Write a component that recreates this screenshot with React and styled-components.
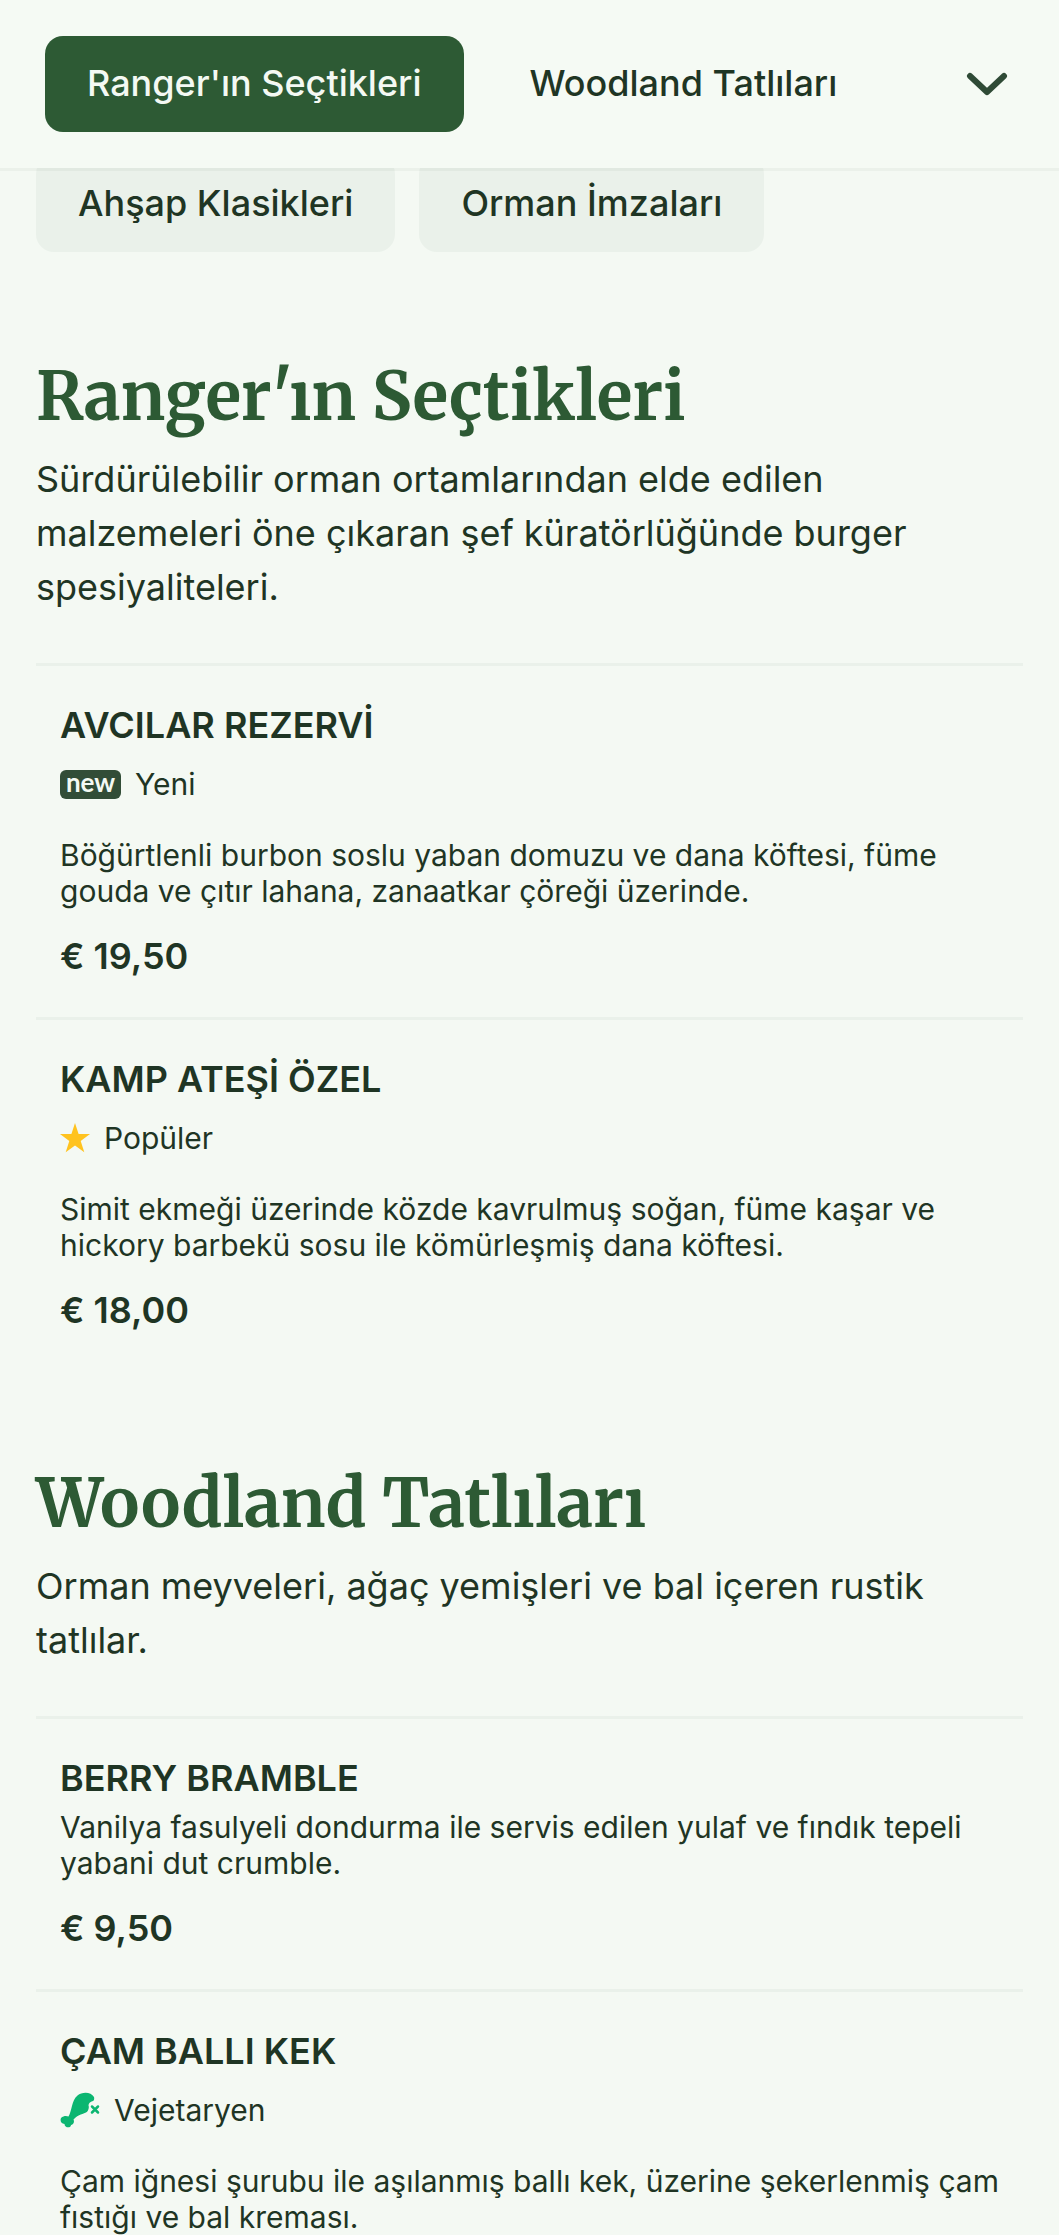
import React from "react";
import styled, { createGlobalStyle } from "styled-components";

const GlobalStyle = createGlobalStyle`
  * {
    box-sizing: border-box;
  }

  body {
    margin: 0;
    background: #f4f9f3;
    color: #1f3524;
    font-family: Inter, "Liberation Sans", sans-serif;
  }

  h2, h3, p {
    margin: 0;
  }
`;

const Page = styled.div`
  display: flex;
  flex-direction: column;
  height: 100vh;
  overflow: hidden;
`;

const Header = styled.header`
  display: flex;
  flex-shrink: 0;
  align-items: center;
  justify-content: space-between;
  padding: 36px 45px;
  background: #f5faf4;
  background-clip: padding-box;
  border-bottom: 3px solid rgba(31, 53, 36, 0.04);
  z-index: 1;
`;

const Tabs = styled.nav`
  display: flex;
  gap: 24px;
`;

const Tab = styled.button`
  height: 96px;
  padding: 0 42px 2px;
  border: 0;
  border-radius: 18px;
  background: ${({ $active }) => ($active ? "#2d5a34" : "transparent")};
  color: ${({ $active }) => ($active ? "#f4f9f3" : "#1f3524")};
  font: 500 36px Inter, sans-serif;
  white-space: nowrap;
`;

const Pill = styled(Tab)`
  background: #eaf1ea;
`;

const IconButton = styled.button`
  display: flex;
  padding: 0 6px;
  border: 0;
  background: transparent;
  color: #2f4a36;
`;

/* slides up under the header */
const Content = styled.main`
  flex: 1;
  min-height: 0;
  margin-top: -15px;
  padding: 0 36px;
`;

const Pills = styled.div`
  display: flex;
  gap: 24px;
  margin-bottom: 12px;
`;

const Section = styled.section`
  padding-top: 89px;
`;

const Heading = styled.h2`
  color: #2d5a34;
  font: bold 66px/88px Merriweather, "Liberation Serif", serif;
`;

const Intro = styled.p`
  margin-top: 11px;
  max-width: 900px;
  font-size: 36px;
  line-height: 54px;
`;

const Items = styled.div`
  margin-top: 49px;
`;

const Item = styled.article`
  padding: 36px 24px 38px;
  border-top: 3px solid #eaf1ea;
`;

const ItemTitle = styled.h3`
  margin-bottom: 8px;
  font-size: 36px;
  font-weight: 600;
  line-height: 46px;
`;

const Tag = styled.div`
  display: flex;
  align-items: center;
  gap: 14px;
  margin: 18px 0 35px;
  font-size: 30px;
  line-height: 36px;
`;

const NewBadge = styled.span`
  width: 61px;
  height: 29px;
  border-radius: 6px;
  background: #324d37;
  color: #f4f9f3;
  font: 700 26px/24px Lato, sans-serif;
  text-align: center;
`;

const ItemText = styled.p`
  font-size: 30px;
  line-height: 36px;
`;

const Price = styled.p`
  margin-top: 24px;
  font-size: 36px;
  font-weight: 600;
  line-height: 46px;
`;

const ChevronIcon = () => (
  <svg width="42" height="24" viewBox="0 0 42 24" fill="none">
    <path
      d="M4 4l17 16L38 4"
      stroke="currentColor"
      strokeWidth="6"
      strokeLinecap="round"
      strokeLinejoin="round"
    />
  </svg>
);

const StarIcon = () => (
  <svg width="30" height="30" viewBox="0 0 30 30">
    <path
      d="M15 0l3.6 11.1H30l-9.3 6.9 3.6 11.3L15 22.4l-9.3 6.9L9.3 18 0 11.1h11.4z"
      fill="#ffc31f"
    />
  </svg>
);

const VeganIcon = () => (
  <svg width="40" height="36" viewBox="0 0 40 36">
    <path
      d="M8.5 24.5C12 19 11.5 8 17.500 3.500C22 -0.500 31 -0.500 34 5C34.500 7 34 8.500 33 9C30 9.500 28.500 11.500 28.500 13.500C29.500 16 28 19.500 26 20.500C21 22.500 17 23.500 13.500 27.500C15 31 12.500 33 11 33C11 36.500 4.500 36 4.500 32C0 31.500 -1 25.500 3.500 24.500C6 23.500 7.500 24.500 8.5 24.5Z"
      fill="#0bb671"
    />
    <path
      d="M32 14.500l6 6M38 14.500l-6 6"
      stroke="#0bb671"
      strokeWidth="2.5"
      strokeLinecap="round"
    />
  </svg>
);

const tags = {
  new: { label: "Yeni", icon: <NewBadge>new</NewBadge> },
  popular: { label: "Popüler", icon: <StarIcon /> },
  vegetarian: { label: "Vejetaryen", icon: <VeganIcon /> }
};

const sections = [
  {
    title: "Ranger'ın Seçtikleri",
    intro:
      "Sürdürülebilir orman ortamlarından elde edilen malzemeleri öne çıkaran şef küratörlüğünde burger spesiyaliteleri.",
    items: [
      {
        title: "AVCILAR REZERVİ",
        tag: "new",
        text:
          "Böğürtlenli burbon soslu yaban domuzu ve dana köftesi, füme gouda ve çıtır lahana, zanaatkar çöreği üzerinde.",
        price: "€ 19,50"
      },
      {
        title: "KAMP ATEŞİ ÖZEL",
        tag: "popular",
        text:
          "Simit ekmeği üzerinde közde kavrulmuş soğan, füme kaşar ve hickory barbekü sosu ile kömürleşmiş dana köftesi.",
        price: "€ 18,00"
      }
    ]
  },
  {
    title: "Woodland Tatlıları",
    intro: "Orman meyveleri, ağaç yemişleri ve bal içeren rustik tatlılar.",
    items: [
      {
        title: "BERRY BRAMBLE",
        text:
          "Vanilya fasulyeli dondurma ile servis edilen yulaf ve fındık tepeli yabani dut crumble.",
        price: "€ 9,50"
      },
      {
        title: "ÇAM BALLI KEK",
        tag: "vegetarian",
        text:
          "Çam iğnesi şurubu ile aşılanmış ballı kek, üzerine şekerlenmiş çam fıstığı ve bal kreması."
      }
    ]
  }
];

const MenuItem = ({ title, tag, text, price }) => {
  return (
    <Item>
      <ItemTitle>{title}</ItemTitle>
      {tag && (
        <Tag>
          {tags[tag].icon}
          <span>{tags[tag].label}</span>
        </Tag>
      )}
      <ItemText>{text}</ItemText>
      {price && <Price>{price}</Price>}
    </Item>
  );
};

const App = () => {
  return (
    <Page>
      <GlobalStyle />
      <Header>
        <Tabs>
          <Tab $active>Ranger'ın Seçtikleri</Tab>
          <Tab>Woodland Tatlıları</Tab>
        </Tabs>
        <IconButton aria-label="Menü">
          <ChevronIcon />
        </IconButton>
      </Header>
      <Content>
        <Pills>
          <Pill>Ahşap Klasikleri</Pill>
          <Pill>Orman İmzaları</Pill>
        </Pills>
        {sections.map(section => (
          <Section key={section.title}>
            <Heading>{section.title}</Heading>
            <Intro>{section.intro}</Intro>
            <Items>
              {section.items.map(item => (
                <MenuItem key={item.title} {...item} />
              ))}
            </Items>
          </Section>
        ))}
      </Content>
    </Page>
  );
};

export default App;
